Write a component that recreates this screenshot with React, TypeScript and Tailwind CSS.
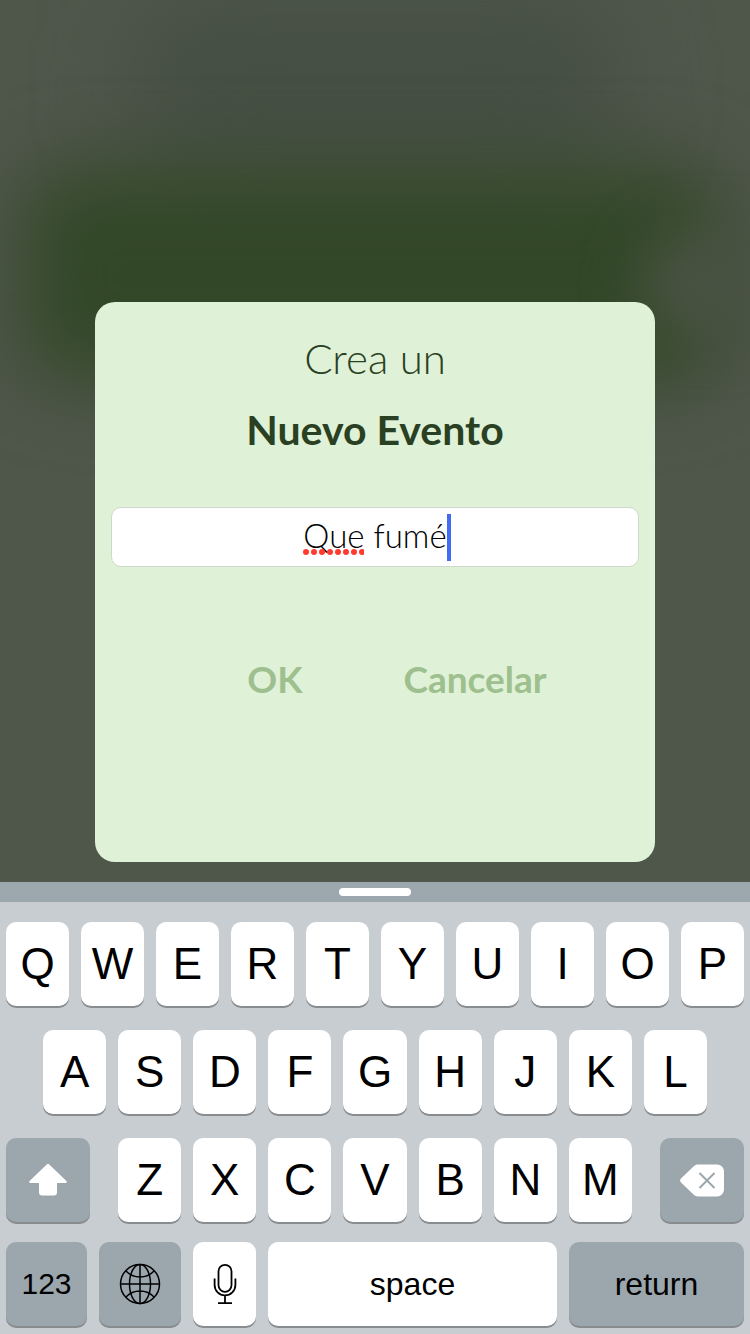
import React, { useState } from "react";

const ROW_ONE = ["Q", "W", "E", "R", "T", "Y", "U", "I", "O", "P"];
const ROW_TWO = ["A", "S", "D", "F", "G", "H", "J", "K", "L"];
const ROW_THREE = ["Z", "X", "C", "V", "B", "N", "M"];

type KeyProps = {
  children: React.ReactNode;
  dark?: boolean;
  size?: "letter" | "word" | "digits";
  label?: string;
};

const KEY_TEXT = {
  letter: "text-[44px]",
  word: "text-[32px]",
  digits: "text-[30px]",
};

function Key({ children, dark = false, size = "letter", label }: KeyProps) {
  const tone = dark ? "bg-[#9ba6ad]" : "bg-white";
  return (
    <button
      type="button"
      aria-label={label}
      className={`flex h-[84px] min-w-0 items-center justify-center rounded-[10px] leading-none text-black shadow-[0_2px_0_#898c8f] ${tone} ${KEY_TEXT[size]}`}
    >
      {children}
    </button>
  );
}

function ShiftIcon() {
  return (
    <svg width="38" height="34" viewBox="0 0 38 34" fill="#fff" aria-hidden="true">
      <path d="M18 1.300a1.500 1.500 0 0 1 2 0L37.200 17.800c1 1 .5 2.200-.9 2.200H28v9.500a3 3 0 0 1-3 3H13a3 3 0 0 1-3-3V20H1.700c-1.400 0-1.900-1.200-.9-2.200z" />
    </svg>
  );
}

function DeleteIcon() {
  return (
    <svg width="44" height="33" viewBox="0 0 44 33" aria-hidden="true">
      <path
        d="M18 .5H37a7 7 0 0 1 7 7V25.500a7 7 0 0 1-7 7H18c-1.600 0-3-.6-4.200-1.700L1 18.500c-1.200-1.200-1.200-2.800 0-4L13.800 2.200C15 1.100 16.400.5 18 .5z"
        fill="#fff"
      />
      <path d="M19.500 9l15 15M34.500 9l-15 15" stroke="#9ba6ad" strokeWidth="2" fill="none" />
    </svg>
  );
}

function GlobeIcon() {
  return (
    <svg width="42" height="42" viewBox="0 0 42 42" fill="none" stroke="#000" strokeWidth="1.500" aria-hidden="true">
      <circle cx="21" cy="21" r="19.500" />
      <ellipse cx="21" cy="21" rx="10.500" ry="19.500" />
      <path d="M21 1.500v39M1.500 21h39M7 8c3.500 3.800 8.500 6 14 6s10.500-2.200 14-6M7 34c3.500-3.800 8.500-6 14-6s10.500 2.200 14 6" />
    </svg>
  );
}

function MicIcon() {
  return (
    <svg width="24" height="42" viewBox="0 0 24 42" fill="none" stroke="#000" strokeWidth="1.800" aria-hidden="true">
      <rect x="5.500" y="1.800" width="13" height="27" rx="6.500" />
      <path d="M1.600 15.500v6.500a10.400 10.400 0 0 0 20.800 0v-6.500M12 32.400V40M5 40.200h14" />
    </svg>
  );
}

function Backdrop() {
  return (
    <div className="absolute inset-0 overflow-hidden bg-[#4f574b]" aria-hidden="true">
      <div className="absolute inset-x-[18%] top-0 h-[180px] rounded-[60px] bg-[#454f43] blur-[45px]" />
      <div className="absolute top-[170px] right-8 left-6 h-[210px] rounded-[40px] bg-[#324727] blur-[40px]" />
      <div className="absolute -right-5 top-[235px] h-[100px] w-[130px] rounded-full bg-[#495343] blur-[28px]" />
    </div>
  );
}

function EventDialog() {
  const [name, setName] = useState("Que fumé");
  return (
    <section
      role="dialog"
      aria-labelledby="dialog-title"
      className="relative flex aspect-square w-full max-w-[560px] flex-col rounded-[20px] bg-[#dff1d6] px-4 pt-8 font-['Lato',sans-serif]"
    >
      <h1 id="dialog-title" className="text-center text-[#2a4022]">
        <span className="block text-[42px] leading-[48px] font-light">Crea un</span>
        <span className="mt-6 block text-[41px] leading-[48px] font-bold">Nuevo Evento</span>
      </h1>
      <div className="relative mt-[53px]">
        <input
          type="text"
          aria-label="Nuevo Evento"
          value={name}
          spellCheck={false}
          onChange={(e) => setName(e.target.value)}
          className="block h-[60px] w-full rounded-[10px] border border-[#cfd8ca] bg-white pb-1 text-center text-[33px] font-light text-black outline-none"
        />
        <div className="pointer-events-none absolute inset-0 flex justify-center pl-1">
          <div className="flex w-[148px] items-center justify-between">
            <svg width="61" height="6" viewBox="0 0 61 6" fill="#ff3b30" className="mt-[30px]" aria-hidden="true">
              {[0, 1, 2, 3, 4, 5, 6, 7].map((i) => (
                <circle key={i} cx={3 + i * 8} cy="3" r="3" />
              ))}
            </svg>
            <span className="h-[47px] w-1 bg-[#416cf0]" />
          </div>
        </div>
      </div>
      <div className="mx-auto mt-[88px] grid w-[400px] max-w-full grid-cols-2 text-[37px] leading-[48px] font-bold text-[#9ebf8e]">
        <button type="button">OK</button>
        <button type="button">Cancelar</button>
      </div>
    </section>
  );
}

function Keyboard() {
  return (
    <div className="bg-[#c8cdd1] font-['Liberation_Sans',sans-serif]">
      <div className="flex h-5 items-center justify-center bg-[#9ca7ae]">
        <span className="h-2 w-[72px] rounded-full bg-white" />
      </div>
      <div className="flex flex-col px-[6px] pt-5 pb-2">
        <div className="grid grid-cols-10 gap-3">
          {ROW_ONE.map((k) => (
            <Key key={k}>{k}</Key>
          ))}
        </div>
        <div className="mt-6 grid grid-cols-9 gap-3 px-[37px]">
          {ROW_TWO.map((k) => (
            <Key key={k}>{k}</Key>
          ))}
        </div>
        <div className="mt-6 grid grid-cols-[84fr_514fr_84fr] gap-7">
          <Key dark label="Shift">
            <ShiftIcon />
          </Key>
          <div className="grid grid-cols-7 gap-3">
            {ROW_THREE.map((k) => (
              <Key key={k}>{k}</Key>
            ))}
          </div>
          <Key dark label="Delete">
            <DeleteIcon />
          </Key>
        </div>
        <div className="mt-5 grid grid-cols-[81fr_82fr_63fr_289fr_175fr] gap-3">
          <Key dark size="digits">
            123
          </Key>
          <Key dark label="Next keyboard">
            <GlobeIcon />
          </Key>
          <Key label="Dictate">
            <MicIcon />
          </Key>
          <Key size="word">space</Key>
          <Key dark size="word">
            return
          </Key>
        </div>
      </div>
    </div>
  );
}

export default function App() {
  return (
    <div className="flex min-h-screen flex-col">
      <main className="relative flex flex-1 flex-col items-center justify-end px-4 pt-16 pb-5">
        <Backdrop />
        <EventDialog />
      </main>
      <Keyboard />
    </div>
  );
}
